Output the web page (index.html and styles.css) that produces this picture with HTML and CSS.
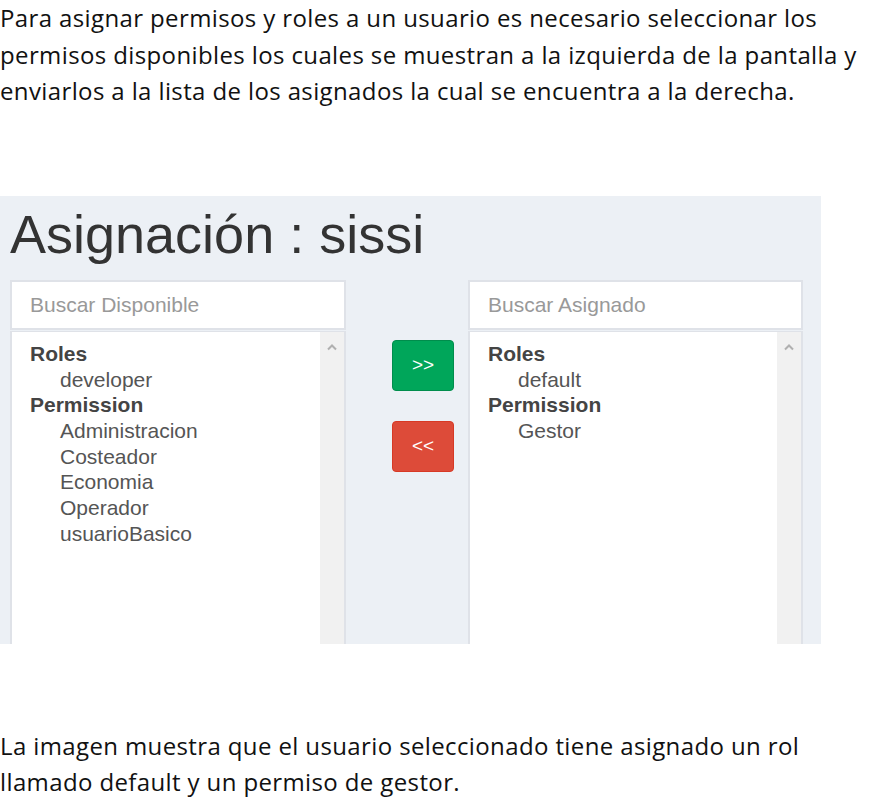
FILE: index.html
```html
<!DOCTYPE html>
<html lang="es">

<head>
    <meta charset="UTF-8">
    <meta name="viewport" content="width=device-width, initial-scale=1.0">
    <title>Asignación de permisos</title>
    <link rel="stylesheet" href="styles.css">
</head>

<body>
    <p class="prose">Para asignar permisos y roles a un usuario es necesario seleccionar los<br>
        permisos disponibles los cuales se muestran a la izquierda de la pantalla y<br>
        enviarlos a la lista de los asignados la cual se encuentra a la derecha.</p>

    <div class="panel">
        <h1 class="title">Asignación : sissi</h1>

        <div class="columns">
            <div class="picker">
                <input class="search" type="text" placeholder="Buscar Disponible">
                <div class="list">
                    <div class="items">
                        <div class="group">Roles</div>
                        <div class="item">developer</div>
                        <div class="group">Permission</div>
                        <div class="item">Administracion</div>
                        <div class="item">Costeador</div>
                        <div class="item">Economia</div>
                        <div class="item">Operador</div>
                        <div class="item">usuarioBasico</div>
                    </div>
                    <div class="scrollbar">
                        <svg width="12" height="8" viewBox="0 0 12 8"><path d="M2 6.5 L6 2.5 L10 6.5" fill="none" stroke="#b0b0b0" stroke-width="2"/></svg>
                    </div>
                </div>
            </div>

            <div class="actions">
                <button class="btn btn-add">&gt;&gt;</button>
                <button class="btn btn-remove">&lt;&lt;</button>
            </div>

            <div class="picker">
                <input class="search" type="text" placeholder="Buscar Asignado">
                <div class="list">
                    <div class="items">
                        <div class="group">Roles</div>
                        <div class="item">default</div>
                        <div class="group">Permission</div>
                        <div class="item">Gestor</div>
                    </div>
                    <div class="scrollbar">
                        <svg width="12" height="8" viewBox="0 0 12 8"><path d="M2 6.5 L6 2.5 L10 6.5" fill="none" stroke="#b0b0b0" stroke-width="2"/></svg>
                    </div>
                </div>
            </div>
        </div>
    </div>

    <p class="prose prose-bottom">La imagen muestra que el usuario seleccionado tiene asignado un rol<br>
        llamado default y un permiso de gestor.</p>
</body>

</html>
```

FILE: styles.css
```css
body {
    margin: 0;
    font-family: "Open Sans", Lato, sans-serif;
    color: #111;
}

.prose {
    margin: 0;
    font-size: 24px;
    letter-spacing: 0.38px;
    line-height: 36.5px;
}

.prose-bottom {
    margin-top: 84px;
}

.panel {
    margin-top: 86px;
    width: 801px;
    height: 448px;
    padding: 0 10px;
    background-color: #ecf0f5;
    overflow: hidden;
    font-family: "Liberation Sans", Arial, sans-serif;
}

.title {
    margin: 9px 0 16px;
    font-size: 54px;
    font-weight: normal;
    line-height: 1.1;
    color: #333;
}

.columns {
    display: grid;
    grid-template-columns: 336px 122px 335px;
    align-items: start;
}

.picker {
    display: flex;
    flex-direction: column;
}

.search {
    box-sizing: border-box;
    height: 50px;
    margin: 0;
    padding: 0 18px;
    border: 2px solid #dfe2e8;
    background: #fff;
    font-family: "Liberation Sans", Arial, sans-serif;
    font-size: 21px;
    color: #555;
    outline: none;
}

.search::placeholder {
    color: #999;
}

.list {
    display: flex;
    height: 330px;
    margin-top: 1px;
    border: 2px solid #dfe2e8;
    border-top-width: 1px;
    background: #fff;
}

.items {
    flex: 1;
    padding: 9px 18px;
    font-size: 21px;
    line-height: 25.7px;
    color: #555;
}

.group {
    font-weight: bold;
    color: #444;
}

.item {
    padding-left: 30px;
}

.scrollbar {
    width: 24px;
    background-color: #f1f1f1;
    display: flex;
    justify-content: center;
    align-items: flex-start;
    padding-top: 11px;
}

.actions {
    display: flex;
    flex-direction: column;
    align-items: flex-start;
    gap: 30px;
    padding: 60px 0 0 46px;
}

.btn {
    width: 62px;
    height: 51px;
    border-radius: 4px;
    font-family: "Liberation Sans", Arial, sans-serif;
    font-size: 19px;
    color: #fff;
    cursor: pointer;
}

.btn-add {
    background-color: #00a65a;
    border: 1px solid #008d4c;
}

.btn-remove {
    background-color: #dd4b39;
    border: 1px solid #d73925;
}
```
